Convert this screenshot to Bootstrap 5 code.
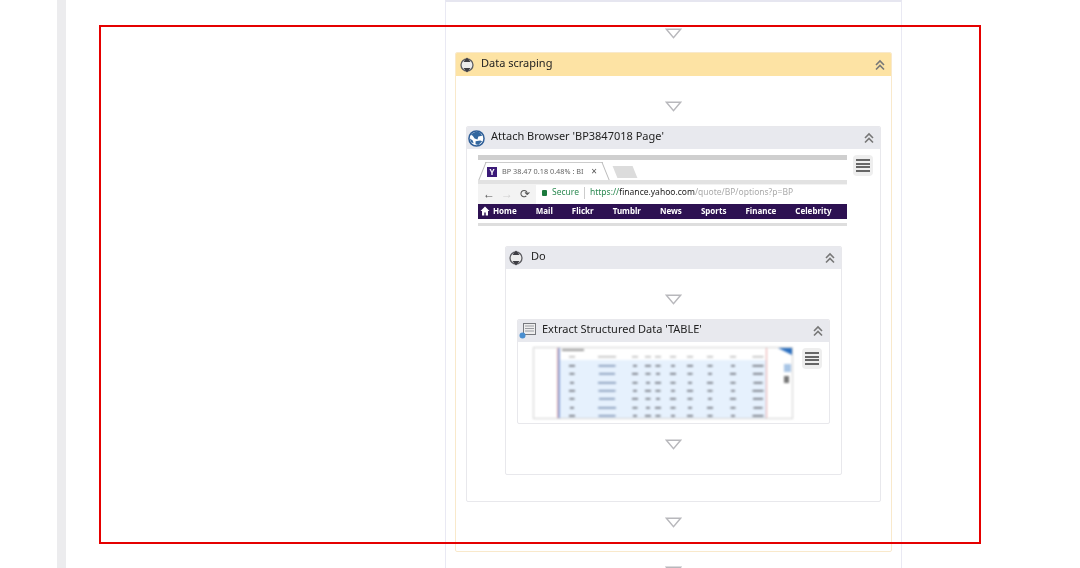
<!DOCTYPE html>
<html lang="en">
<head>
  <meta charset="UTF-8">
  <meta name="viewport" content="width=device-width, initial-scale=1.0">
  <title>Data scraping workflow</title>
  <link href="https://cdn.jsdelivr.net/npm/bootstrap@5.3.0/dist/css/bootstrap.min.css" rel="stylesheet">
  <script src="https://cdn.jsdelivr.net/npm/bootstrap@5.3.0/dist/js/bootstrap.bundle.min.js"></script>
  <style>
    html, body { height: 568px; overflow: hidden; background: #fff; }
    body { font-family: "Noto Sans", "Liberation Sans", sans-serif; color: #333; }
    #stage { height: 568px; filter: blur(.55px); }
    .side-strip { width: 9px; margin-left: 57px; background: #ececee; flex: none; }
    .outer-panel { width: 457px; margin-left: 379px; height: 568px; border-left: 1px solid #e9e9f3; border-right: 1px solid #e9e9f3; border-top: 2px solid #e6e6f0; flex: none; }

    .gap-top, .gap-bot { height: 50px; }
    .gap-top { padding-top: 25px; }
    .gap-bot { padding-top: 15px; }
    .gap-first { padding-top: 26px; }
    .gap-last { padding-top: 14px; }
    .flow-arrow { display: block; margin: 0 auto; width: 17px; height: 11px; }

    .wf-card { --bs-card-border-radius: 2px; --bs-card-inner-border-radius: 1px; border: 1px solid #e8e8ec; background: #fff; }
    .wf-head { flex: none; height: 22px; padding: 0 5px 0 3px; background: #e8e9ee; border: 0; border-radius: 1px 1px 0 0 !important; font-size: 11px; color: #222; }
    .wf-title { margin-left: 6px; line-height: 18px; margin-bottom: 4px; }
    .wf-card > .card-body { padding: 0; flex: none; }
    .chev { width: 12px; height: 12px; flex: none; }

    .data-card { margin: 0 9px; height: 500px; border-color: #f9e9cb; }
    .data-card > .wf-head { background: #fde3a4; height: 23px; }
    .attach-card { margin: 0 10px; height: 376px; }
    .attach-card > .wf-head { padding-left: 1px; }
    .do-card { margin: 20px 38px 0; height: 229px; }
    .do-card > .wf-head { padding-left: 2px; }
    .do-card > .wf-head .wf-title { margin-left: 7px; }
    .extract-card { margin: 0 11px; height: 105px; }
    .extract-card > .wf-head { padding-left: 1px; }
    .extract-card .wf-title { margin-left: 5px; }

    .menu-btn { width: 20px; height: 21px; background: #eeeeee; flex: none; padding: 4px 3px; }
    .menu-btn i { display: block; height: 2px; background: #666; margin-bottom: 1.5px; }

    .attach-top { padding: 6px 6px 0 11px; }
    .browser-shot { width: 369px; height: 71px; font-size: 7px; margin-right: 6px; flex: none; }
    .shot-rule { height: 5px; background: #cfcfcf; }
    .shot-tabs { height: 20px; padding: 2px 0 0 7px; }
    .shot-tab { width: 118px; height: 18px; border-top: 1px solid #ccc; background: #fff; padding: 0 6px 0 2px; position: relative; color: #666; font-size: 7.3px; white-space: nowrap; }
    .shot-tab::before, .shot-tab::after { content: ""; position: absolute; top: -1px; width: 1px; height: 18px; background: #bbb; }
    .shot-tab::before { left: -3px; transform: skewX(-22deg); }
    .shot-tab::after { right: -3px; transform: skewX(22deg); }
    .tab-favicon { width: 10px; height: 10px; background: #3b1a78; color: #fff; font-size: 8px; font-weight: 700; line-height: 10px; text-align: center; margin-right: 5px; flex: none; }
    .tab-close { margin-left: auto; font-size: 10px; color: #555; }
    .tab-new { width: 20px; height: 12px; background: #dcdcdc; margin: 4px 0 0 12px; transform: skewX(22deg); }
    .shot-line { height: 4px; background: #e2e2e2; }
    .shot-tools { height: 20px; background: #f3f3f3; padding-left: 2px; }
    .tool-glyph { width: 18px; text-align: center; font-size: 12px; line-height: 16px; color: #555; }
    .tool-glyph.pale { color: #d0d0d0; }
    .shot-address { flex: 1; height: 19px; margin-left: 2px; background: #fff; padding: 0 0 3px 6px; font-size: 8.5px; white-space: nowrap; overflow: hidden; }
    .lock-dot { width: 5px; height: 6px; background: #1c7a3d; border-radius: 1px; margin-right: 5px; flex: none; }
    .txt-secure { color: #2c8a52; }
    .addr-sep { width: 1px; height: 12px; background: #ccc; margin: 0 5px; }
    .txt-host { color: #222; }
    .txt-path { color: #aaa; }
    .shot-nav { height: 15px; background: #2d1152; color: #fff; font-size: 8px; font-weight: 700; padding: 0 0 2px 2px; white-space: nowrap; }
    .shot-nav span { margin-right: 19px; flex: none; }
    .shot-nav svg { width: 10px; height: 10px; margin-right: 3px; flex: none; }
    .shot-foot { height: 3px; background: #dedede; margin-top: 4px; }

    .wf-card > .extract-body { padding: 5px 8px 0 15px; }
    .table-shot { width: 260px; height: 72px; margin-right: 9px; flex: none; border: 1px solid #d2d2d2; filter: blur(.8px); }
    .table-shot svg { display: block; }
    .extract-body .menu-btn { margin-top: 1px; }

    .note-frame { position: absolute; left: 99px; top: 25px; width: 882px; height: 519px; border: 2px solid #e50000; pointer-events: none; }
  </style>
</head>
<body class="position-relative">
  <svg width="0" height="0" class="position-absolute">
    <symbol id="i-arrow" viewBox="0 0 18 11"><path d="M1.500 1h15L9 10z" fill="#fff" stroke="#b8b8bc" stroke-width="1.500"/></symbol>
    <symbol id="i-chev" viewBox="0 0 12 12"><path d="M2 6l4-4 4 4M2 10.500l4-4 4 4" fill="none" stroke="#777" stroke-width="1.600"/></symbol>
    <symbol id="i-seq" viewBox="0 0 16 16"><circle cx="8" cy="8" r="6" fill="#ececec" stroke="#5d5d62" stroke-width="1.300"/><path d="M8 .5l3.500 4.500h-7zM8 15.500l-3.500-4.500h7z" fill="#3e3e44"/></symbol>
    <symbol id="i-globe" viewBox="0 0 18 18"><circle cx="9" cy="9" r="8" fill="#fff" stroke="#2f5f98" stroke-width="1.600"/><path d="M3 5c3-3 7-4 10-2l2 3-4 1-1 3-3-1-2-3zM8 12l5-1 2 1-4 4-3-1zM2 9l3 2 1 3-3-1z" fill="#34689f"/></symbol>
    <symbol id="i-extract" viewBox="0 0 18 18"><rect x="4.500" y="1.500" width="12" height="11" fill="#eee" stroke="#77797e"/><path d="M6 4h9M6 6.500h9M6 9h9" stroke="#9a9ca2"/><circle cx="3.500" cy="13.500" r="3" fill="#4a8fd0"/></symbol>
  </svg>

  <div id="stage" class="d-flex">
    <div class="side-strip"></div>
    <div class="outer-panel">
      <div class="gap-top gap-first"><svg class="flow-arrow"><use href="#i-arrow"/></svg></div>

      <div class="card wf-card data-card">
        <div class="card-header wf-head d-flex align-items-center">
          <svg width="16" height="16"><use href="#i-seq"/></svg>
          <span class="wf-title">Data scraping</span>
          <svg class="chev ms-auto"><use href="#i-chev"/></svg>
        </div>
        <div class="card-body">
          <div class="gap-top"><svg class="flow-arrow"><use href="#i-arrow"/></svg></div>

          <div class="card wf-card attach-card">
            <div class="card-header wf-head d-flex align-items-center">
              <svg width="17" height="17"><use href="#i-globe"/></svg>
              <span class="wf-title">Attach Browser 'BP3847018 Page'</span>
              <svg class="chev ms-auto"><use href="#i-chev"/></svg>
            </div>
            <div class="card-body">
              <div class="attach-top d-flex">
                <div class="browser-shot">
                  <div class="shot-rule"></div>
                  <div class="shot-tabs d-flex">
                    <div class="shot-tab d-flex align-items-center">
                      <div class="tab-favicon">Y</div>
                      <span>BP 38.47 0.18 0.48% : BI</span>
                      <span class="tab-close">×</span>
                    </div>
                    <div class="tab-new"></div>
                  </div>
                  <div class="shot-line"></div>
                  <div class="shot-tools d-flex align-items-center">
                    <span class="tool-glyph">←</span>
                    <span class="tool-glyph pale">→</span>
                    <span class="tool-glyph">⟳</span>
                    <div class="shot-address d-flex align-items-center">
                      <i class="lock-dot"></i>
                      <span class="txt-secure">Secure</span>
                      <i class="addr-sep"></i>
                      <span class="txt-secure">https://</span><span class="txt-host">finance.yahoo.com</span><span class="txt-path">/quote/BP/options?p=BP</span>
                    </div>
                  </div>
                  <div class="shot-nav d-flex align-items-center">
                    <svg viewBox="0 0 10 10"><path d="M5 .5L.5 5H2v4.500h2.300V6.500h1.400v3H8V5h1.500z" fill="#fff"/></svg>
                    <span>Home</span><span>Mail</span><span>Flickr</span><span>Tumblr</span><span>News</span><span>Sports</span><span>Finance</span><span>Celebrity</span>
                  </div>
                  <div class="shot-foot"></div>
                </div>
                <div class="menu-btn rounded-1"><i></i><i></i><i></i><i></i></div>
              </div>

              <div class="card wf-card do-card">
                <div class="card-header wf-head d-flex align-items-center">
                  <svg width="16" height="16"><use href="#i-seq"/></svg>
                  <span class="wf-title">Do</span>
                  <svg class="chev ms-auto"><use href="#i-chev"/></svg>
                </div>
                <div class="card-body">
                  <div class="gap-top"><svg class="flow-arrow"><use href="#i-arrow"/></svg></div>

                  <div class="card wf-card extract-card">
                    <div class="card-header wf-head d-flex align-items-center">
                      <svg width="18" height="18"><use href="#i-extract"/></svg>
                      <span class="wf-title">Extract Structured Data 'TABLE'</span>
                      <svg class="chev ms-auto"><use href="#i-chev"/></svg>
                    </div>
                    <div class="card-body extract-body d-flex">
                      <div class="table-shot">
                        <svg id="tableShot" width="258" height="70" viewBox="0 0 258 70"></svg>
                      </div>
                      <div class="menu-btn rounded-1"><i></i><i></i><i></i><i></i></div>
                    </div>
                  </div>

                  <div class="gap-bot"><svg class="flow-arrow"><use href="#i-arrow"/></svg></div>
                </div>
              </div>
            </div>
          </div>

          <div class="gap-bot"><svg class="flow-arrow"><use href="#i-arrow"/></svg></div>
        </div>
      </div>

      <div class="gap-last"><svg class="flow-arrow"><use href="#i-arrow"/></svg></div>
    </div>
  </div>

  <div class="note-frame"></div>

  <script>
    // thumbnail of the scraped table: rows of tiny cell marks
    const colX = [38, 73, 101, 114, 124, 139, 156, 176, 199, 224];
    const rowY = [17, 25, 34, 42, 50, 59, 67];
    let marks = '<rect x="26" y="0" width="206" height="70" fill="#e6f1fd"/>' +
      '<rect x="26" y="0" width="206" height="12" fill="#fff"/>' +
      '<rect x="23" y="0" width="1" height="70" fill="#e9a9a9"/>' +
      '<rect x="24" y="0" width="2" height="70" fill="#8fa6d8"/>' +
      '<rect x="232" y="0" width="1" height="70" fill="#e9a9a9"/>' +
      '<path d="M244 0h14v7z" fill="#2a6fc0"/>' +
      '<rect x="28" y="1" width="22" height="2" fill="#999"/>' +
      '<rect x="250" y="16" width="7" height="8" fill="#a9c6e6"/>' +
      '<rect x="250" y="28" width="5" height="7" fill="#777"/>';
    colX.forEach((x, c) => {
      const w = c === 1 ? 18 : c === 9 ? 11 : 6;
      marks += `<rect x="${x - w / 2}" y="8" width="${w}" height="1.500" fill="#bbb"/>`;
      rowY.forEach((y, r) => {
        const ink = c === 1 ? '#7f93b5' : '#6c6f78';
        const cw = w - ((r + c) % 3);
        marks += `<rect x="${x - cw / 2}" y="${y}" width="${cw}" height="1.600" fill="${ink}"/>`;
      });
    });
    document.getElementById("tableShot").innerHTML = marks;
  </script>
</body>
</html>
